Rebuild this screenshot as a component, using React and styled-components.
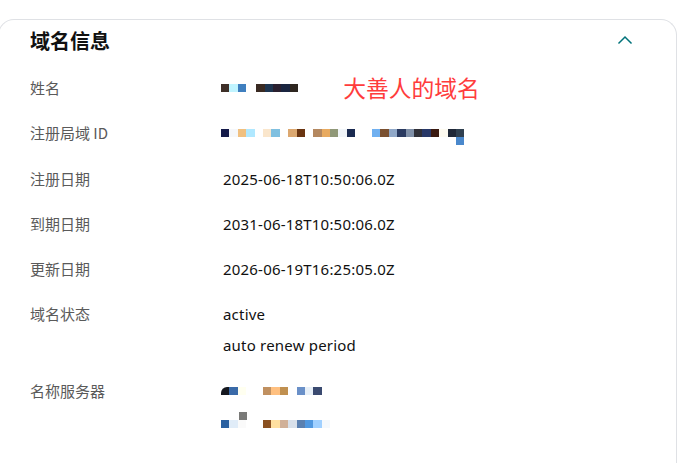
import styled, { createGlobalStyle } from "styled-components";

const GlobalStyle = createGlobalStyle`
  html, body {
    margin: 0;
    padding: 0;
    background: #ffffff;
    overflow: hidden;
  }
  body {
    font-family: "Noto Sans", "Noto Sans CJK SC", sans-serif;
    color: #111111;
  }
`;

// blurred-out values are drawn as rows of colour cells
const CELL = 8.4;

const namePixels = [
  "#3e2f28", "#c0f4ff", "#3f7fbf",
  { gap: 10 },
  "#3a2a22", "#1e3550", "#2a2030", "#1a2540", "#2e2620",
];

const registryPixels = [
  "#141a4a", "#f5f7fa", "#f0c080", "#b0e8ff", null, "#fae6cc", "#80c0e0", null,
  "#dca870", "#6a3410", null, "#b48860", "#e8aa60", "#909878", "#f0f4f8", "#1a2a50",
  null, null,
  "#70b0f0", "#7a5030", "#90a8c8", "#2a3a60", "#8090a8", "#303038", "#283868",
  "#3a1a10", "#fdfaf0", "#202838", { color: "#304050", drop: "#4a88cc" },
];

const nsPixelsA = [
  { color: "#15181f", round: true }, "#3a6aa8", "#fffff0", null, null,
  "#c09060", "#ffc080", "#c09050", null,
  "#6a90c8", "#e8f0f8", "#3a4a70",
];

const nsPixelsB = [
  "#2a60a0", "#e0ecf8", { color: "#fafafa", lift: "#7a7a78" }, null, null,
  "#8a5020", "#ffe0a0", "#d0b098", "#d8e0ea", "#5a80b0", "#5098e0", "#a0d0ff", "#f4f8fc",
];

const Page = styled.div`
  padding: 19px 13px 0 0;
`;

const Card = styled.section`
  margin-left: -2px;
  border: 1px solid #dfe1e5;
  border-bottom: none;
  border-radius: 16px 16px 0 0;
  background: #ffffff;
  padding: 0 0 60px 31px;
`;

const Header = styled.div`
  display: flex;
  align-items: center;
  justify-content: space-between;
  height: 42px;
  padding-right: 43px;
`;

const Title = styled.h2`
  margin: 0;
  font-family: "Noto Sans CJK SC", sans-serif;
  font-size: 20px;
  font-weight: 700;
  color: #111111;
  line-height: 1;
`;

const Toggle = styled.button`
  display: flex;
  padding: 0;
  margin-top: -2px;
  border: none;
  background: none;
  color: #00727a;
  cursor: pointer;
`;

const Details = styled.dl`
  display: grid;
  grid-template-columns: 193px 1fr;
  row-gap: 23.3px;
  margin: 15px 0 0;
`;

const Label = styled.dt`
  font-family: "Noto Sans CJK SC", sans-serif;
  font-size: 15px;
  line-height: 22px;
  color: #5a5a5a;
`;

const Value = styled.dd`
  margin: 0;
  display: flex;
  flex-direction: column;
  gap: ${(p) => p.$gap || 9}px;
  font-size: 15px;
  letter-spacing: 0.2px;
  line-height: 22px;
  color: #111111;
`;

const Line = styled.div`
  display: flex;
  align-items: center;
  height: 22px;
`;

const Mosaic = styled.div`
  display: flex;
  margin-left: -2px;
`;

const Cell = styled.span`
  flex: none;
  width: ${(p) => p.$w}px;
  height: 8px;
  background: ${(p) => p.$color || "transparent"};
  border-top-left-radius: ${(p) => (p.$round ? "6px" : "0")};
  box-shadow: ${(p) =>
    p.$drop
      ? `0 8px 0 ${p.$drop}`
      : p.$lift
      ? `1px -8px 0 ${p.$lift}`
      : "none"};
`;

const Note = styled.span`
  margin-left: 45px;
  font-family: "Noto Sans CJK SC", sans-serif;
  font-size: 22.8px;
  letter-spacing: 0;
  color: #ff3c3c;
  line-height: 22px;
`;

const Pixels = ({ cells }) => (
  <Mosaic>
    {cells.map((c, i) => {
      if (c && c.gap) return <Cell key={i} $w={c.gap} />;
      if (c && typeof c === "object")
        return (
          <Cell
            key={i}
            $w={CELL}
            $color={c.color}
            $round={c.round}
            $drop={c.drop}
            $lift={c.lift}
          />
        );
      return <Cell key={i} $w={CELL} $color={c} />;
    })}
  </Mosaic>
);

const ChevronUp = () => (
  <svg width="16" height="16" viewBox="0 0 16 16" fill="none">
    <path
      d="M2 11 L8 5 L14 11"
      stroke="currentColor"
      strokeWidth="1.5"
      strokeLinecap="square"
    />
  </svg>
);

export default function App() {
  const rows = [
    { label: "注册日期", lines: ["2025-06-18T10:50:06.0Z"] },
    { label: "到期日期", lines: ["2031-06-18T10:50:06.0Z"] },
    { label: "更新日期", lines: ["2026-06-19T16:25:05.0Z"] },
    { label: "域名状态", lines: ["active", "auto renew period"] },
  ];

  return (
    <>
      <GlobalStyle />
      <Page>
        <Card>
          <Header>
            <Title>域名信息</Title>
            <Toggle aria-label="收起">
              <ChevronUp />
            </Toggle>
          </Header>
          <Details>
            <Label>姓名</Label>
            <Value>
              <Line>
                <Pixels cells={namePixels} />
                <Note>大善人的域名</Note>
              </Line>
            </Value>

            <Label>注册局域 ID</Label>
            <Value>
              <Line>
                <Pixels cells={registryPixels} />
              </Line>
            </Value>

            {rows.map((r) => [
              <Label key={r.label}>{r.label}</Label>,
              <Value key={r.label + "-v"}>
                {r.lines.map((t) => (
                  <Line key={t}>{t}</Line>
                ))}
              </Value>,
            ])}

            <Label>名称服务器</Label>
            <Value $gap={11}>
              <Line>
                <Pixels cells={nsPixelsA} />
              </Line>
              <Line>
                <Pixels cells={nsPixelsB} />
              </Line>
            </Value>
          </Details>
        </Card>
      </Page>
    </>
  );
}
